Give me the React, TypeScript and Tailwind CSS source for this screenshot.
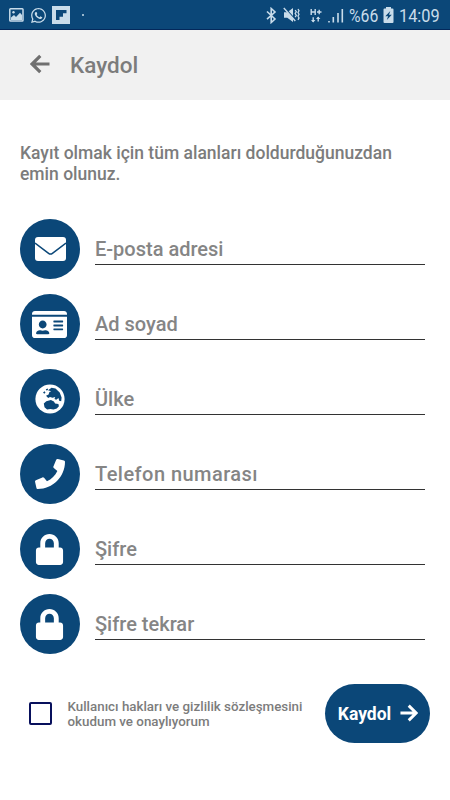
import type { ReactNode } from "react";
import { FaIdCard, FaLock, FaPhone, FaWhatsapp } from "react-icons/fa";

function StatusBar() {
  return (
    <header className="flex h-[30px] shrink-0 items-center border-b border-[#03285b] bg-[#0b4778] text-[#c9dcea]">
      <svg className="ml-[9px] mt-px" width="15" height="14" viewBox="0 0 15 14">
        <rect x="0.8" y="0.8" width="13.2" height="12.2" rx="0.8" fill="none" stroke="currentColor" strokeWidth="1.5" />
        <circle cx="4.5" cy="4.2" r="1.2" fill="currentColor" />
        <path d="M2 12V9.5L5 7l2 2 4-4.2L13 7v5Z" fill="currentColor" />
      </svg>
      <FaWhatsapp className="ml-[6px] mt-px" size={17} />
      <svg className="ml-[5px] mt-px" width="18" height="18" viewBox="0 0 18 18">
        <path fill="currentColor" fillRule="evenodd" d="M0 0h18v18H0ZM4 4v10h3.500v-3.200H11V7.300h3.500V4Z" />
      </svg>
      <span className="ml-[12px] h-[2px] w-[2px] rounded-full bg-current" />
      <svg className="ml-auto mt-px" width="11" height="17" viewBox="0 0 11 17">
        <path d="M1 4.500 9 12l-3.800 3.500v-14L9 5 1 12.200" fill="none" stroke="currentColor" strokeWidth="1.600" />
      </svg>
      <svg className="ml-[6px] mt-px" width="17" height="16" viewBox="0 0 17 16">
        <path d="M1 5.200h3.300L10 1v14l-5.700-4.200H1Z" fill="currentColor" />
        <path d="m1.500 .5 11 12.500" stroke="#0b4778" strokeWidth="1.500" />
        <path d="m.8 1 11.500 13" stroke="currentColor" strokeWidth="1.400" />
        <path d="m12.200 3 1.100 1.700-1.100 1.800 1.100 1.800-1.100 1.800M15 2l1 1.700-1 1.800 1 1.800-1 1.800 1 1.800-1 2" fill="none" stroke="currentColor" strokeWidth="1.300" />
      </svg>
      <svg className="ml-[10px] mt-px" width="12" height="15" viewBox="0 0 12 15">
        <path d="M1.200 1v6M5.200 1v6M1.200 4h4M7 4h4.500M9.200 1.800v4.500M3.200 9.200v4.500M8.200 9v4.500" stroke="currentColor" strokeWidth="1.400" />
        <path d="m1 12 2.200 2.400L5.400 12ZM6 11l2.200-2.400 2.200 2.400Z" fill="currentColor" />
      </svg>
      <svg className="ml-[6px] mt-px" width="16" height="15" viewBox="0 0 16 15">
        <path d="M1 13v1.500M5.300 9v5.500M10 5v9.500M14.300 1v13.500" stroke="currentColor" strokeWidth="1.600" />
      </svg>
      <span className="ml-[5px] mt-[2px] w-[29px] origin-left whitespace-nowrap text-[19px] leading-[30px] [transform:scaleX(0.83)]">%66</span>
      <svg className="ml-[5px] mt-px" width="11" height="16" viewBox="0 0 11 16">
        <path d="M3 0h5v1.600h1.500q1 0 1 1V15q0 1-1 1h-8q-1 0-1-1V2.600q0-1 1-1H3Z" fill="currentColor" />
        <path d="m7.300 4-5 5.200h2.800L3.800 13l5-5.200H6Z" fill="#0b4778" />
      </svg>
      <span className="ml-[5px] mr-[10px] mt-[2px] w-[41px] origin-left whitespace-nowrap text-[19px] leading-[30px] [transform:scaleX(0.86)]">14:09</span>
    </header>
  );
}

function Arrow({ left = false, size = 20 }: { left?: boolean; size?: number }) {
  return (
    <svg width={size} height={size} viewBox="0 0 20 20" className={left ? "rotate-180" : ""}>
      <path d="M.5 10h17M9.700 1.800l8.200 8.200-8.200 8.200" fill="none" stroke="currentColor" strokeWidth="3.200" />
    </svg>
  );
}

function Mail() {
  return (
    <svg width="31" height="24" viewBox="0 0 31 24">
      <rect width="31" height="24" rx="3" fill="white" />
      <path d="M0 6 13.600 16.300q1.900 1.400 3.800 0L31 6" fill="none" stroke="#0b4778" strokeWidth="1.500" />
    </svg>
  );
}

function Globe() {
  return (
    <svg width="30" height="30" viewBox="0 0 30 30">
      <circle cx="15" cy="15" r="14.600" fill="white" />
      <g fill="#0b4778">
        <path d="m13 6.200 3.500-2.500 4 .8 4.200 4 1.900 5-.4 3.800-2-.6-.7-2.600-2.300 1.700-1.700-.9.700-2-2.700.8-2.500-.7-1.800 1-2.200-2.300 2.600-1.300.8-2.300 1.800-.8Z" />
        <path d="m8 8.500 1.500-1.300 1 1.200-1.200 1.300Zm2.800-3.300 2-.7.2 1.500-1.600.5Z" />
        <path d="m8.800 19.600 2.500-2.300 4.600-1.200 3 1.300 1.200 2 3.300.7.500 2.100-2.100 2.300-3.300 1-3.100-.5-3.300.4-2.600-2.100Z" />
      </g>
    </svg>
  );
}

function Field({ icon, label, text = "" }: { icon: ReactNode; label: string; text?: string }) {
  return (
    <label className="flex h-[60px] items-start">
      <span className="flex h-[60px] w-[60px] shrink-0 items-center justify-center rounded-full bg-[#0b4778] text-white">{icon}</span>
      <span className="ml-[15px] flex h-[46px] w-[330px] items-end border-b border-[#333] pb-[2px]">
        <span className={`whitespace-nowrap text-[20px] font-medium leading-[26px] text-[#858585] ${text}`}>{label}</span>
      </span>
    </label>
  );
}

export default function App() {
  return (
    <main className="flex h-[800px] w-[450px] flex-col overflow-hidden bg-white font-['Roboto',sans-serif]">
      <StatusBar />
      <nav className="flex h-[70px] shrink-0 items-center bg-[#f1f1f1] pl-[30px] text-[#707070]">
        <span className="-mt-[2px]"><Arrow left /></span>
        <h1 className="ml-[20px] text-[22.5px] font-medium leading-[28px] text-[#7c7c7c]">Kaydol</h1>
      </nav>
      <p className="ml-[20px] mt-[43px] whitespace-nowrap text-[17.5px] font-medium leading-[21px] text-[#7c7c7c]">
        Kayıt olmak için tüm alanları doldurduğunuzdan<br />emin olunuz.
      </p>
      <form className="ml-[20px] mt-[34.4px] flex flex-col gap-[15px]">
        <Field icon={<Mail />} label="E-posta adresi" />
        <Field icon={<FaIdCard className="mr-px" size={35} />} label="Ad soyad" />
        <Field icon={<Globe />} label="Ülke" />
        <Field icon={<FaPhone size={30} />} label="Telefon numarası" text="tracking-[0.45px]" />
        <Field icon={<FaLock className="mr-px" size={31} />} label="Şifre" />
        <Field icon={<FaLock className="mr-px" size={31} />} label="Şifre tekrar" />
      </form>
      <footer className="ml-[28.5px] mr-[20px] mt-[29.6px] flex h-[59px] items-center">
        <span className="h-[23px] w-[23px] shrink-0 rounded-[2px] border-2 border-[#08105c]" />
        <p className="ml-[16px] mt-[2px] whitespace-nowrap text-[13.35px] font-medium leading-[15px] text-[#7c7c7c]">
          Kullanıcı hakları ve gizlilik sözleşmesini<br />okudum ve onaylıyorum
        </p>
        <button className="ml-auto flex h-[59px] w-[105px] shrink-0 items-center rounded-[30px] bg-[#0b4778] pl-[12.5px] text-white">
          <span className="mt-[2px] w-[54px] whitespace-nowrap text-[17.5px] font-bold">Kaydol</span>
          <span className="ml-[8px]"><Arrow size={18} /></span>
        </button>
      </footer>
    </main>
  );
}
